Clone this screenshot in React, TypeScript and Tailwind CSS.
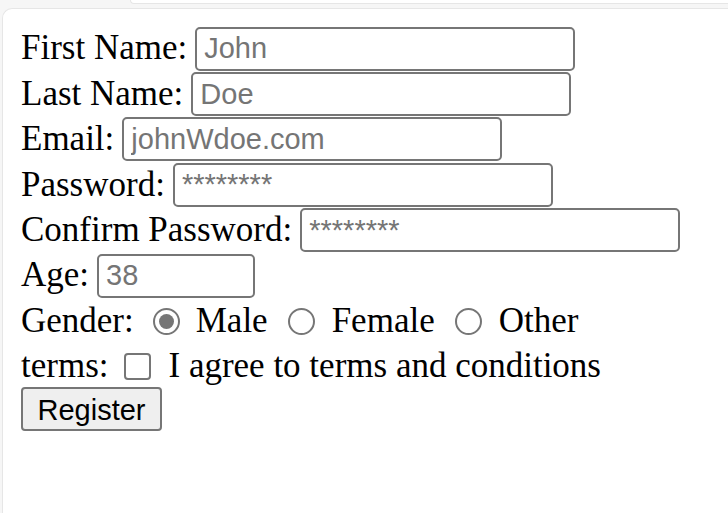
import React from "react";

const inputCls =
  "h-[44px] border-2 border-[#767676] rounded-[5px] bg-white pl-[7px] pr-[4px] text-[29px] text-black placeholder:text-[#757575] font-['Liberation_Sans',Arial,sans-serif] outline-none";

const Field = ({
  label,
  placeholder,
  type = "text",
  width = "w-[380px]",
}: {
  label: string;
  placeholder: string;
  type?: string;
  width?: string;
}) => (
  <div className="flex h-[45.4px] items-center">
    <label>{label}</label>
    <input type={type} placeholder={placeholder} className={`${inputCls} ${width} ml-[8px]`} />
  </div>
);

const Radio = ({ checked }: { checked?: boolean }) => (
  <span className="flex h-[27px] w-[27px] items-center justify-center rounded-full border-2 border-[#767676] bg-white">
    {checked && <span className="h-[15px] w-[15px] rounded-full bg-[#767676]" />}
  </span>
);

export default function App() {
  return (
    <div className="flex h-[513px] w-[728px] flex-col overflow-hidden bg-[#f6f6f6]">
      <div className="flex h-[8px]">
        <div className="ml-[130px] h-[4px] flex-1 rounded-bl-[10px] border-b border-l border-[#e6e6e6] bg-white" />
      </div>
      <div className="ml-[2px] flex-1 rounded-tl-[10px] border-l border-t border-[#e6e6e6] bg-white pl-[18px] pt-[17px] font-['Liberation_Serif','Times_New_Roman',serif] text-[35px] text-black">
        <form className="flex flex-col" onSubmit={(e) => e.preventDefault()}>
          <Field label="First Name:" placeholder="John" />
          <Field label="Last Name:" placeholder="Doe" />
          <Field label="Email:" placeholder="johnWdoe.com" />
          <Field label="Password:" placeholder="********" type="password" />
          <Field label="Confirm Password:" placeholder="********" type="password" />
          <Field label="Age:" placeholder="38" width="w-[158px]" />

          <div className="flex h-[45.4px] items-center">
            <span>Gender:</span>
            <span className="ml-[19px]">
              <Radio checked />
            </span>
            <span className="ml-[16px]">Male</span>
            <span className="ml-[20px]">
              <Radio />
            </span>
            <span className="ml-[17px]">Female</span>
            <span className="ml-[20px]">
              <Radio />
            </span>
            <span className="ml-[17px]">Other</span>
          </div>

          <div className="flex h-[45.4px] items-center">
            <span>terms:</span>
            <span className="ml-[16px] h-[27px] w-[27px] rounded-[4px] border-2 border-[#767676] bg-white" />
            <span className="ml-[17px]">I agree to terms and conditions</span>
          </div>

          <div className="-mt-[2px] flex">
            <button
              type="submit"
              className="h-[44px] w-[141px] rounded-[4px] border-2 border-[#767676] bg-[#efefef] text-[29px] text-black font-['Liberation_Sans',Arial,sans-serif]"
            >
              Register
            </button>
          </div>
        </form>
      </div>
    </div>
  );
}
